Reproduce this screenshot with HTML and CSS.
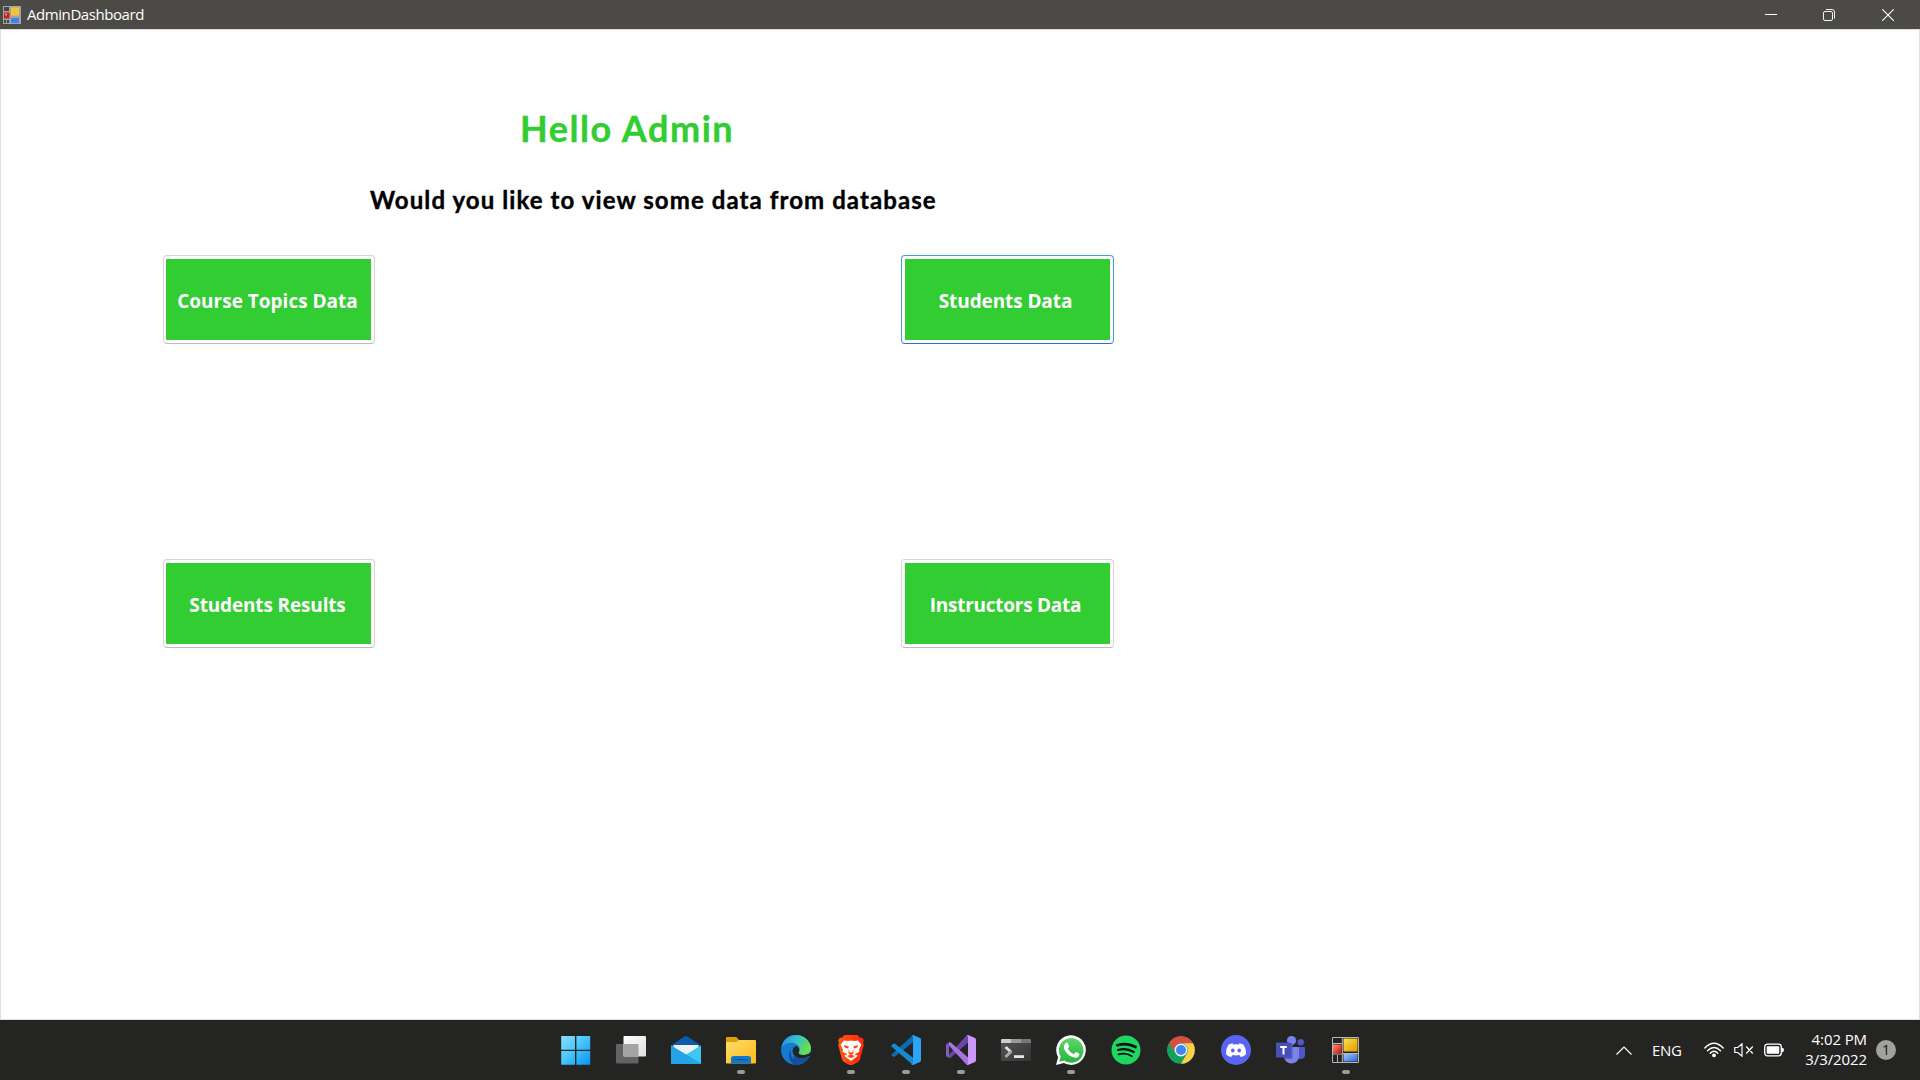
FILE: index.html
```html
<!DOCTYPE html>
<html lang="en">
<head>
<meta charset="utf-8">
<title>AdminDashboard</title>
<link rel="stylesheet" href="styles.css">
</head>
<body>
<svg width="0" height="0" class="defs" aria-hidden="true">
  <defs>
    <linearGradient id="win" x1="0" y1="0" x2="1" y2="1"><stop offset="0" stop-color="#8ae2ff"/><stop offset=".5" stop-color="#43c3fb"/><stop offset="1" stop-color="#0793f8"/></linearGradient>
    <linearGradient id="white" x1="0" y1="0" x2="1" y2="1"><stop offset="0" stop-color="#fff"/><stop offset="1" stop-color="#dcdcdc"/></linearGradient>
    <linearGradient id="folder" x1="0" y1="0" x2="1" y2="1"><stop offset="0" stop-color="#ffdc6b"/><stop offset="1" stop-color="#fbbc18"/></linearGradient>
    <linearGradient id="edgeTop" x1="0" y1="0" x2="1" y2=".4"><stop offset="0" stop-color="#2387e0"/><stop offset=".5" stop-color="#30bfd5"/><stop offset="1" stop-color="#68e04a"/></linearGradient>
    <linearGradient id="brave" x1="0" y1="0" x2="1" y2="0"><stop offset="0" stop-color="#ff5a12"/><stop offset="1" stop-color="#ff2508"/></linearGradient>
    <linearGradient id="wa" x1="0" y1="0" x2="0" y2="1"><stop offset="0" stop-color="#5fd66c"/><stop offset="1" stop-color="#25b43e"/></linearGradient>
    <linearGradient id="yellow" x1="0" y1="0" x2="1" y2="1"><stop offset="0" stop-color="#ffe04c"/><stop offset="1" stop-color="#e19b00"/></linearGradient>
    <linearGradient id="red" x1="0" y1="0" x2="1" y2="1"><stop offset="0" stop-color="#ff8d80"/><stop offset="1" stop-color="#c90d07"/></linearGradient>
    <linearGradient id="blue" x1="0" y1="0" x2="1" y2="1"><stop offset="0" stop-color="#a0c8ff"/><stop offset="1" stop-color="#2867d8"/></linearGradient>
    <linearGradient id="term" x1="0" y1="0" x2="1" y2="1"><stop offset="0" stop-color="#555"/><stop offset="1" stop-color="#343434"/></linearGradient>
  </defs>
</svg>
<div class="desktop">
  <header class="titlebar">
    <svg class="app-icon" viewBox="0 0 18 18"><rect width="18" height="18" fill="#a3a3a3"/><path d="M1 1h5v4H1zM1 14h2v3H1zM4 14h2v3H4z" fill="#454545"/><rect x="8" y="1.500" width="8" height="8" fill="#f5c534"/><rect x="1" y="6.500" width="5.500" height="6" fill="#c5231c"/><rect x="2" y="7.500" width="2" height="2" fill="#ef8c80"/><rect x="8" y="12" width="8" height="5" fill="#3f83ea"/></svg>
    <span class="title">AdminDashboard</span>
    <div class="controls">
      <svg viewBox="0 0 12 12"><path d="M0 5.500h12" stroke="#fff"/></svg>
      <svg viewBox="0 0 12 12" fill="none" stroke="#f2f2f2"><rect x=".5" y="2.500" width="9" height="9" rx="1.500"/><path d="M3 .5h6a2.500 2.500 0 0 1 2.500 2.500v6.500"/></svg>
      <svg viewBox="0 0 12 12"><path d="M.2.2l11.600 11.600M11.800.2L.2 11.800" stroke="#fff" stroke-width="1.100"/></svg>
    </div>
  </header>
  <main class="window">
    <h1 class="greeting">Hello Admin</h1>
    <p class="prompt">Would you like to view some data from database</p>
    <div class="actions">
      <button class="action course"><span>Course Topics Data</span></button>
      <button class="action right focused"><span>Students Data</span></button>
      <button class="action results"><span>Students Results</span></button>
      <button class="action right instructors"><span>Instructors Data</span></button>
    </div>
  </main>
  <footer class="taskbar">
    <nav class="apps">
      <div class="app"><svg viewBox="0 0 30 30"><path d="M.2 1H14v13.800H.2zM15.400 1h13.800v13.800H15.400zM.2 16H14v13.800H.2zM15.400 16h13.800v13.800H15.400z" fill="url(#win)"/></svg></div>
      <div class="app"><svg viewBox="0 0 30 30"><rect x="0" y="9" width="22.500" height="19.500" rx="1" fill="#636363"/><rect x="7.500" y="1" width="22.500" height="20.500" rx="1" fill="url(#white)"/><path d="M7.500 9h15v12.500h-14q-1 0-1-1z" fill="#a4a4a4"/></svg></div>
      <div class="app"><svg viewBox="0 0 30 30"><path d="M0 10.500L13.500 1.500q1.500-1 3 0L30 10.500V16H0z" fill="#0b5cad"/><path d="M2.500 10h25v8l-12.500 6-12.500-6z" fill="#f1f1f1"/><path d="M0 10.500l15 9 15-9V28q0 1-1 1H1q-1 0-1-1z" fill="#3bc8f5"/><path d="M0 10.500L30 28.500q-.4.500-1 .5H1q-1 0-1-1z" fill="#25a3e6"/></svg></div>
      <div class="app running"><svg viewBox="0 0 30 30"><path d="M0 3q0-1 1-1h8.500q.8 0 1.400.6L13 5v5H0z" fill="#e2a008"/><path d="M0 7h10.500l2.200-2H29q1 0 1 1v21.500q0 1-1 1H1q-1 0-1-1z" fill="url(#folder)"/><path d="M5 28.500v-5q0-2.500 2.500-2.500h15q2.500 0 2.500 2.500v5z" fill="#1177c9"/><path d="M8.500 24.600h13" stroke="#07539c" stroke-width="1.200"/></svg></div>
      <div class="app"><svg viewBox="0 0 30 30"><circle cx="15" cy="15" r="15" fill="#137bd2"/><path d="M10 15C8 25 17 29 27.500 22.500 24 28 18 30 14 30 8 27 6 20 10 15z" fill="#124f9e"/><path d="M.4 12.500C2.500 3 9 0 15 0c9.500 0 15 7.500 15 13 0 5-3.800 7-8 7-3 0-5-1.300-4.300-2.500C21 13.500 17 8 10.500 7.700 6 7.500 2 9.500.4 12.500z" fill="url(#edgeTop)"/><path d="M15.500 11c-4 1-5 5.500-2.500 9 4 4.500 10 4 14.600 1.300l2.400-.6V17c-2 2.500-5 3.200-8 3-3.500-.1-5-1.400-4.300-2.500 1.300-2 .3-5.500-2.200-6.500z" fill="#242423"/><path d="M13 20c4 4.500 10 4 14.600 1.300.7-.3 1 0 .6.800-3.200 4.500-8 6.300-11.200 5.600-4-1-5-4.500-4-7.700z" fill="#124f9e"/></svg></div>
      <div class="app running"><svg viewBox="0 0 30 30"><path d="M8.500 0h13L24 2.700l2-.3 2 3-1 2.100.8 2.500-3.700 14q-.5 2-2 3l-5.700 3q-1.400.6-2.800 0l-5.700-3q-1.500-1-2-3L2.200 10 3 7.500 2 5.400l2-3 2 .3z" fill="url(#brave)"/><path d="M15 5.400l3 .5 4-.4 3.500 4.200-2.500 5 .4 2-4.400 2.300.6 1.500 2-1-.6 2-6 4.500-6-4.500-.6-2 2 1 .6-1.500-4.400-2.300.4-2-2.500-5L8 5.500l4 .4z" fill="#fff"/><path d="M8 10l4.800 1.500-.8 2-3.300-1zM22 10l-4.800 1.500.8 2 3.300-1zM12.800 14l-.3 4.500L15 20l2.500-1.500-.3-4.500-1 3.500h-2.400zM11 21l4-1.500 4 1.500-4 2.300z" fill="#ff4310"/></svg></div>
      <div class="app running"><svg viewBox="0 0 30 30"><path d="M.5 19.600L22 0v7.300L4 21.600q-1 .8-1.800 0L.5 20.500z" fill="#0b6caf"/><path d="M.5 10.500l1.700-1.700q.9-.7 1.800 0L22 22.700V30L.5 11.400z" fill="#168cd0"/><path d="M22 0l7 3q1 .6 1 1.700v20.600q0 1.200-1 1.700l-7 3q-1 .2-1.700-.6.900.4 1.700-.5V1.100q-.8-.9-1.700-.5Q21-.2 22 0z" fill="#2aa4f4"/></svg></div>
      <div class="app running"><svg viewBox="0 0 30 30"><path d="M0 9l3-1.700q1-.3 1.900.4L22 22.500V30l-1.500-.6L3 10.500v9.300L20.500.6 22 0v7.400L5 22.600q-.9.700-1.900.2L0 21z" fill="#6a45a5"/><path d="M0 9v12l3 1.700V10.500z" fill="#835ac0"/><path d="M3 7.300q1-.4 2 .4L22 22.500V30l-1.500-.6L3 10.500z" fill="#a476dc"/><path d="M22 0l7 3q1 .6 1 1.700v20.600q0 1.200-1 1.700l-7 3q-1 .1-1.500-.5 1.500.1 1.500-1V1.500q0-1-1.500-1Q21-.1 22 0z" fill="#c999fa"/></svg></div>
      <div class="app"><svg viewBox="0 0 30 30"><rect y="4" width="30" height="22" rx="1.200" fill="url(#term)"/><path d="M0 8V5.200Q0 4 1.200 4H10v4z" fill="#ccc"/><path d="M10 4h10v4H10z" fill="#999"/><path d="M20 4h8.800Q30 4 30 5.200V8H20z" fill="#777"/><path d="M4.500 12l5.500 5" fill="none" stroke="#dedede" stroke-width="3"/><path d="M4.500 22l5.800-5.800" stroke="#aaa" stroke-width="3"/><path d="M13 20.200h10V23H13z" fill="#e5e5e5"/></svg></div>
      <div class="app running"><svg viewBox="0 0 30 30"><path d="M0 30l2.100-7.700A14.800 14.800 0 1 1 7.800 28z" fill="#fff"/><path d="M3.300 26.800l1.400-5A12.300 12.300 0 1 1 8.200 25.500z" fill="url(#wa)"/><path d="M9.800 8c.8-.7 1.600-.5 2 .2l1.300 3c.3.700-1.200 2-1.300 2.400 1.500 2.900 3.500 4.500 6 5.500.7 0 1.600-2 2.300-2l3 1.500c.5.500.2 2.300-.8 3.200-1.300 1.300-3.300 1.300-5.700.3-4-1.500-7-4.800-8.400-8.200-.6-2.200-.2-4.500 1.600-5.900z" fill="#fff"/></svg></div>
      <div class="app"><svg viewBox="0 0 30 30"><circle cx="15" cy="15" r="14.500" fill="#1ed760"/><g fill="none" stroke="#111" stroke-linecap="round"><path d="M6.300 10.200Q16 7.200 24.600 12" stroke-width="2.700"/><path d="M7 15q8.500-2.400 15.800 2" stroke-width="2.200"/><path d="M7.600 19.400q7.200-2 13.300 1.800" stroke-width="1.800"/></g></svg></div>
      <div class="app"><svg viewBox="0 0 30 30"><circle cx="15" cy="15" r="13.800" fill="#16a05d"/><path d="M3 8.200A13.800 13.800 0 0 1 27 8.300H15A6.800 6.800 0 0 0 9 18.400z" fill="#dd4c40"/><path d="M3 8.200L9 18.400Q11 21.800 15 21.800L12 28.500A13.800 13.800 0 0 1 3 8.200z" fill="#16a05d"/><path d="M27 8.200A13.800 13.800 0 0 1 15 28.800L21 18.400A6.800 6.800 0 0 0 15 8.200z" fill="#ffce44"/><circle cx="15" cy="15" r="6.500" fill="#f1f1f1"/><circle cx="15" cy="15" r="5" fill="#4285f4"/></svg></div>
      <div class="app"><svg viewBox="0 0 30 30"><circle cx="15" cy="15" r="15" fill="#5865f2"/><path d="M12.200 8.200l-.7 1.300q3.500-.6 7 0l-.7-1.300q2.600.4 4.700 1.500 3 4.700 2.300 9.900-2.400 2-5 2.500l-1.400-2q-3.400.8-6.800 0l-1.400 2q-2.600-.5-5-2.500-.7-5.200 2.300-9.900 2.100-1.100 4.700-1.500z" fill="#fff"/><ellipse cx="11.800" cy="15.600" rx="1.800" ry="2" fill="#5865f2"/><ellipse cx="18.200" cy="15.600" rx="1.800" ry="2" fill="#5865f2"/></svg></div>
      <div class="app"><svg viewBox="0 0 30 30"><circle cx="24.700" cy="7.200" r="3.200" fill="#5059c9"/><path d="M19 12h9q1 0 1 1v6.500q0 4.500-4.700 4.500H19z" fill="#4e57c5"/><circle cx="15.500" cy="5.500" r="4.600" fill="#7b83eb"/><path d="M8 12h14q1 0 1 1v8.500a7.500 7 0 0 1-15 0z" fill="#7b83eb"/><path d="M10 8h5.500q1 0 1 1v14q0 1-1 1H9z" fill="#555fbf"/><rect x="0" y="7.500" width="15" height="15" rx="1.200" fill="#4750b8"/><path d="M4.200 11.100h6.600v1.800H8.500v6.500h-2v-6.500H4.200z" fill="#fff"/></svg></div>
      <div class="app running"><svg viewBox="0 0 30 30"><path d="M1.500 2.500h26v25h-26zM11.300 2.500v25M1.500 8.500h10M1.500 19h10M6.500 20v7M11 18.500h16" fill="none" stroke="#b5b5b5"/><rect x="12.500" y="3.500" width="14" height="13" fill="url(#yellow)"/><rect x="2" y="9.500" width="8.500" height="9" fill="url(#red)"/><rect x="12.500" y="19" width="14" height="7.500" fill="url(#blue)"/></svg></div>
    </nav>
    <div class="tray">
      <svg class="chevron" viewBox="0 0 16 9"><path d="M.5 8.500L8 1l7.500 7.500" fill="none" stroke="#fff" stroke-width="1.200"/></svg>
      <span class="lang">ENG</span>
      <svg class="wifi" viewBox="0 0 20 16" fill="none" stroke="#fff" stroke-width="1.400" stroke-linecap="round"><path d="M.8 6Q10-3.600 19.200 6M3.500 8.700q6.500-6.500 13 0M6.200 11.200q3.800-3.800 7.600 0"/><circle cx="10" cy="13.300" r="1.200" fill="#fff"/></svg>
      <svg class="sound" viewBox="0 0 20 14" fill="none" stroke="#fff" stroke-width="1.200"><path d="M.8 4.500h3L8 .8v12.400L3.800 9.500h-3zM12.200 3.500l6.600 7M18.800 3.500l-6.600 7"/></svg>
      <svg class="battery" viewBox="0 0 20 14"><rect x=".7" y="1.200" width="16.600" height="11.600" rx="2.800" fill="none" stroke="#fff" stroke-width="1.300"/><rect x="2.700" y="3.200" width="12.500" height="7.600" rx="1" fill="#fff"/><path d="M18 4.700q2 0 2 2.300t-2 2.300z" fill="#fff"/></svg>
      <div class="clock"><span>4:02 PM</span><span>3/3/2022</span></div>
      <span class="badge">1</span>
    </div>
  </footer>
</div>
</body>
</html>
```
FILE: styles.css
```css
* { box-sizing: border-box; }
body { margin: 0; font-family: "Open Sans", "Noto Sans", sans-serif; }
.defs { display: block; height: 0; }
.desktop { width: 1920px; height: 1080px; display: flex; flex-direction: column; overflow: hidden; background: #fff; }
.titlebar { height: 29px; flex: none; background: #4b4a47; color: #fff; display: flex; align-items: center; padding-left: 3px; }
.app-icon { width: 18px; height: 18px; margin-right: 6px; }
.title { font-size: 15px; line-height: 26px; padding-bottom: 2px; letter-spacing: -0.430px; }
.controls { margin-left: auto; display: flex; padding-right: 26px; }
.controls svg { width: 12px; height: 12px; display: block; margin-left: 47px; }
.controls svg:nth-child(2) { margin-left: 46px; }
.window { height: 991px; flex: none; border: 1px solid #dedede; padding: 74px 0 0 162px; }
.greeting { margin: 0 0 0 357px; font: 700 36px/48px Lato, sans-serif; color: #32cd32; letter-spacing: 1.550px; white-space: nowrap; -webkit-text-stroke: 0.400px #32cd32; }
.prompt { margin: 32px 0 0 207px; font: 700 24px/32px Lato, sans-serif; color: #000; letter-spacing: 1.090px; white-space: nowrap; -webkit-text-stroke: 0.400px #000; }
.actions { margin-top: 39px; display: grid; grid-template-columns: 212px 213px; grid-template-rows: 89px 89px; gap: 215px 526px; }
.action { border: 1px solid #d6d6d6; border-bottom-color: #bdbdbd; border-radius: 4px; background: #32cd32; background-clip: content-box; padding: 3px 3px 3px 2px; color: #fff; font: 700 19px/26px "Open Sans", "Noto Sans", sans-serif; white-space: nowrap; }
.action span { display: block; padding: 2px 2px 0 0; }
.action.right { padding-left: 3px; }
.action.right span { padding-right: 4px; }
.action.results { letter-spacing: -0.150px; }
.action.instructors { letter-spacing: -0.250px; }
.action.focused { border-color: #4a9be0; border-bottom-color: #2277c4; letter-spacing: -0.100px; }
.taskbar { height: 60px; flex: none; background: #242423; color: #fff; display: flex; align-items: center; padding-left: 548px; }
.apps { display: flex; height: 60px; }
.app { width: 55.070px; height: 60px; display: flex; flex-direction: column; align-items: center; padding-top: 15px; }
.app svg { width: 30px; height: 30px; flex: none; }
.app.running::after { content: ""; width: 8px; height: 4px; border-radius: 2px; background: #9b9b99; margin-top: 5px; }
.tray { display: flex; align-items: center; margin-left: auto; padding-right: 24px; }
.chevron { width: 16px; height: 9px; margin-right: 20px; }
.lang { font-size: 15px; width: 31px; margin-right: 21px; line-height: 20px; letter-spacing: -0.300px; }
.wifi { width: 20px; height: 16px; margin-right: 10px; }
.sound { width: 20px; height: 14px; margin-right: 10px; }
.battery { width: 20px; height: 14px; }
.clock { width: 83px; display: flex; flex-direction: column; align-items: flex-end; font-size: 15px; line-height: 20px; letter-spacing: -0.100px; margin-right: 9px; padding-bottom: 2px; }
.badge { width: 20px; height: 20px; border-radius: 50%; background: #a2a19e; color: #111; font-size: 14px; line-height: 20px; text-align: center; }
```
